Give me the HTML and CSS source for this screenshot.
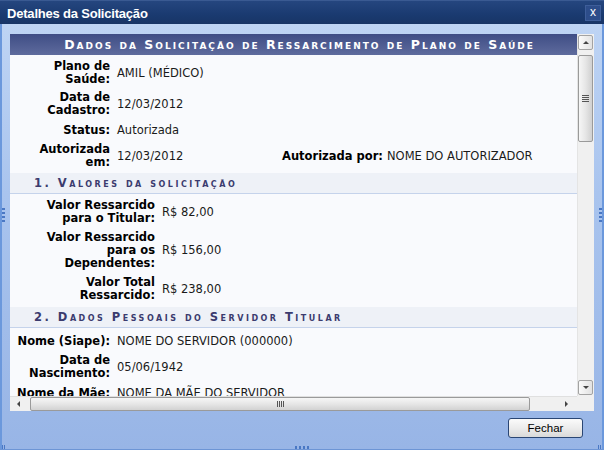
FILE: index.html
```html
<!DOCTYPE html>
<html lang="pt-BR">
<head>
<meta charset="utf-8">
<title>Detalhes da Solicitação</title>
<link rel="stylesheet" href="styles.css">
</head>
<body>
<div class="window">
  <div class="titlebar">
    <span class="title">Detalhes da Solicitação</span>
    <span class="close">x</span>
  </div>
  <div class="wbody">
    <div class="panel">
      <div class="viewport">
        <div class="caption">Dados da Solicitação de Ressarcimento de Plano de Saúde</div>
        <div class="grid g1">
          <div class="lbl">Plano de Saúde:</div><div class="val span3">AMIL (MÉDICO)</div>
          <div class="lbl">Data de Cadastro:</div><div class="val span3">12/03/2012</div>
          <div class="lbl">Status:</div><div class="val span3">Autorizada</div>
          <div class="lbl">Autorizada em:</div><div class="val">12/03/2012</div>
          <div class="lbl nw">Autorizada por:</div><div class="val">NOME DO AUTORIZADOR</div>
        </div>
        <div class="section">1. Valores da solicitação</div>
        <div class="grid g2">
          <div class="lbl">Valor Ressarcido para o Titular:</div><div class="val">R$ 82,00</div>
          <div class="lbl">Valor Ressarcido para os Dependentes:</div><div class="val">R$ 156,00</div>
          <div class="lbl">Valor Total Ressarcido:</div><div class="val">R$ 238,00</div>
        </div>
        <div class="section">2. Dados Pessoais do Servidor Titular</div>
        <div class="grid g3">
          <div class="lbl nw">Nome (Siape):</div><div class="val">NOME DO SERVIDOR (000000)</div>
          <div class="lbl">Data de Nascimento:</div><div class="val">05/06/1942</div>
          <div class="lbl nw">Nome da Mãe:</div><div class="val">NOME DA MÃE DO SERVIDOR</div>
        </div>
      </div>
      <div class="vscroll">
        <div class="sbtn up"><span class="tri-up"></span></div>
        <div class="vthumb"><span class="grip-v"></span></div>
        <div class="vspace"></div>
        <div class="sbtn down"><span class="tri-down"></span></div>
      </div>
      <div class="hscroll">
        <span class="tri-left"></span>
        <div class="hthumb"><span class="grip-h"></span></div>
        <span class="tri-right"></span>
      </div>
      <div class="corner"></div>
    </div>
    <div class="footer">
      <button class="btn" type="button">Fechar</button>
    </div>
  </div>
  <span class="dots dots-left"></span>
  <span class="dots dots-right"></span>
  <span class="dots-bottom"></span>
  <span class="corner-grip cg-left"></span>
  <span class="corner-grip cg-right"></span>
</div>
</body>
</html>
```
FILE: styles.css
```css
* { box-sizing: border-box; }
html, body { margin: 0; padding: 0; }
body {
  width: 604px;
  height: 450px;
  overflow: hidden;
  font-family: "DejaVu Sans", Verdana, sans-serif;
  font-size: 11.5px;
  color: #111;
}
.window {
  position: relative;
  width: 604px;
  height: 450px;
  display: flex;
  flex-direction: column;
}
.titlebar {
  height: 24px;
  flex: none;
  background: linear-gradient(#25467f, #1a3a70 60%, #183566);
  border-top: 1px solid #3a5a92;
  display: flex;
  align-items: center;
  justify-content: space-between;
  padding: 0 3px 0 7px;
}
.title {
  font-family: "Liberation Sans", Arial, sans-serif;
  font-weight: bold;
  font-size: 13px;
  letter-spacing: -0.2px;
  color: #fff;
  margin-top: 1px;
}
.close {
  width: 16px;
  height: 16px;
  background: #2d4d8a;
  border: 1px solid #3e5e9a;
  color: #fff;
  font-family: "Liberation Sans", Arial, sans-serif;
  font-size: 12px;
  line-height: 13px;
  text-align: center;
  margin-top: 1px;
}
.wbody {
  flex: 1;
  background: linear-gradient(#bed4f4, #a9c4ee 40%, #98b5e6);
  border-left: 2px solid #6b98dc;
  border-right: 2px solid #6b98dc;
  border-bottom: 1px solid #6d95d5;
  padding: 10px 8px 0 8px;
  display: flex;
  flex-direction: column;
}
.panel {
  height: 377px;
  display: grid;
  grid-template-columns: 567px 17px;
  grid-template-rows: 362px 15px;
  background: #f9fafd;
}
.viewport {
  overflow: hidden;
  background: #f9fafd;
}
.caption {
  height: 21px;
  background: linear-gradient(#3f4d85, #5e6b9d);
  color: #fff;
  font-weight: bold;
  font-size: 12.5px;
  font-variant: small-caps;
  letter-spacing: 2px;
  text-align: center;
  line-height: 22px;
  white-space: nowrap;
  padding-left: 12px;
}
.grid {
  display: grid;
  align-items: center;
  grid-auto-rows: minmax(20px, auto);
  row-gap: 1px;
  padding: 3px 0 2px;
  line-height: 13px;
}
.g1 { grid-template-columns: 103px 163px 106px 1fr; }
.g2 { grid-template-columns: 148px 1fr; row-gap: 2px; padding-bottom: 3px; }
.g3 { grid-template-columns: 103px 1fr; }
.lbl {
  font-weight: bold;
  text-align: right;
  padding: 2px 3px 2px 6px;
  color: #000;
}
.g2 .lbl { padding-left: 26px; }
.nw { white-space: nowrap; }
.val {
  padding: 2px 0 2px 4px;
  color: #1a1a1a;
}
.g1 .val:last-child { padding-left: 5px; }
.span3 { grid-column: span 3; }
.section {
  height: 21px;
  background: #eef1f7;
  border-bottom: 1px solid #c5d3eb;
  color: #3b3b6e;
  font-weight: bold;
  font-size: 11.5px;
  font-variant: small-caps;
  letter-spacing: 2.5px;
  padding-left: 24px;
  line-height: 21px;
  white-space: nowrap;
}
.vscroll {
  background: #f0f0f0;
  border-left: 1px solid #e4e4e4;
  display: flex;
  flex-direction: column;
  padding: 1px 1px 1px 0;
}
.sbtn {
  height: 15px;
  flex: none;
  border: 1px solid #a3a3a3;
  border-radius: 2px;
  background: linear-gradient(90deg, #fafafa, #e2e2e2);
  display: flex;
  align-items: center;
  justify-content: center;
}
.tri-up {
  width: 0; height: 0;
  border-left: 3px solid transparent;
  border-right: 3px solid transparent;
  border-bottom: 3px solid #444;
}
.tri-down {
  width: 0; height: 0;
  border-left: 3px solid transparent;
  border-right: 3px solid transparent;
  border-top: 3px solid #444;
}
.vthumb {
  margin-top: 5px;
  height: 87px;
  flex: none;
  border: 1px solid #9a9a9a;
  border-radius: 2px;
  background: linear-gradient(90deg, #f6f6f6, #e6e6e6 50%, #d0d0d0);
  display: flex;
  align-items: center;
  justify-content: center;
}
.grip-v {
  width: 7px;
  height: 7px;
  background: repeating-linear-gradient(#555 0 1px, transparent 1px 2px);
}
.vspace { flex: 1; }
.hscroll {
  background: #f0f0f0;
  border-top: 1px solid #e0e0e0;
  display: flex;
  align-items: center;
  padding-left: 7px;
}
.tri-left {
  width: 0; height: 0;
  border-top: 3px solid transparent;
  border-bottom: 3px solid transparent;
  border-right: 3px solid #444;
}
.tri-right {
  width: 0; height: 0;
  border-top: 3px solid transparent;
  border-bottom: 3px solid transparent;
  border-left: 3px solid #444;
  margin-left: 35px;
}
.hthumb {
  margin-left: 10px;
  width: 500px;
  height: 14px;
  border: 1px solid #9a9a9a;
  border-radius: 2px;
  background: linear-gradient(#f6f6f6, #e6e6e6 50%, #d2d2d2);
  display: flex;
  align-items: center;
  justify-content: center;
}
.grip-h {
  width: 7px;
  height: 6px;
  background: repeating-linear-gradient(90deg, #555 0 1px, transparent 1px 2px);
}
.corner { background: #f0f0f0; }
.footer {
  display: flex;
  justify-content: flex-end;
  padding: 7px 11px 0 0;
}
.btn {
  width: 75px;
  height: 20px;
  border: 1px solid #2a4674;
  border-radius: 3px;
  background: linear-gradient(#fbfbfb, #ececec 50%, #d9d9d9);
  font-family: "Liberation Sans", Arial, sans-serif;
  font-size: 11.5px;
  color: #000;
  padding: 0;
}
.dots {
  position: absolute;
  width: 3px;
  height: 14px;
  top: 208px;
  background: repeating-linear-gradient(#4a78c4 0 2px, transparent 2px 4px);
}
.dots-left { left: 2px; }
.dots-right { right: 2px; }
.dots-bottom {
  position: absolute;
  left: 295px;
  bottom: 1px;
  width: 14px;
  height: 3px;
  background: repeating-linear-gradient(90deg, #4a78c4 0 2px, transparent 2px 4px);
}
.corner-grip {
  position: absolute;
  bottom: 1px;
  width: 4px;
  height: 4px;
  background: repeating-linear-gradient(90deg, #4a78c4 0 1px, transparent 1px 2px);
}
.cg-left { left: 2px; }
.cg-right { right: 2px; }
```
